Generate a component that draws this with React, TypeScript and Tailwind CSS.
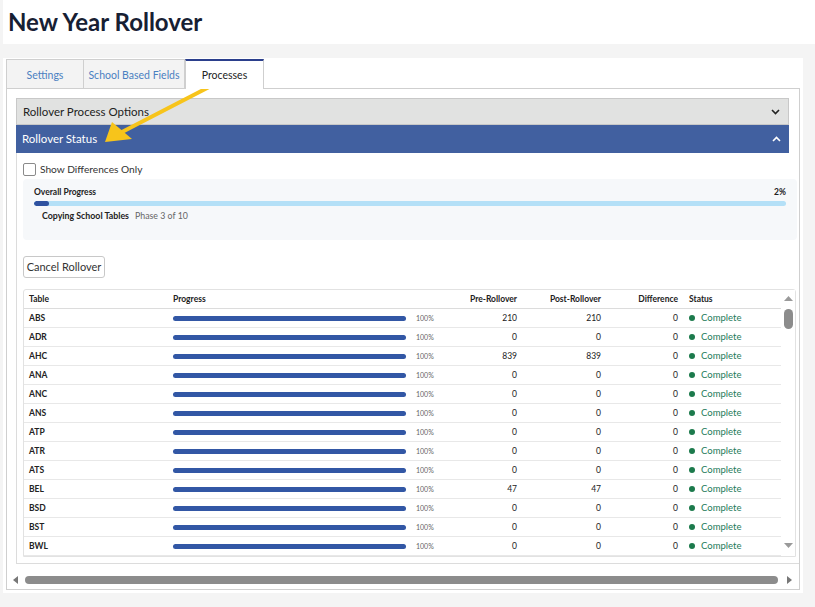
import React from 'react';

const rows: [string, number, number][] = [
  ['ABS', 210, 210],
  ['ADR', 0, 0],
  ['AHC', 839, 839],
  ['ANA', 0, 0],
  ['ANC', 0, 0],
  ['ANS', 0, 0],
  ['ATP', 0, 0],
  ['ATR', 0, 0],
  ['ATS', 0, 0],
  ['BEL', 47, 47],
  ['BSD', 0, 0],
  ['BST', 0, 0],
  ['BWL', 0, 0],
];

const cols = 'grid grid-cols-[143px_280px_75px_84px_77px_1fr] items-center';

const App = () => {
  return (
    <div className="relative min-h-screen bg-[#f4f4f4] font-['Lato',sans-serif] text-[#222]">
      {/* Header */}
      <div className="ml-[3px] flex h-[44px] items-center bg-white pl-[5px]">
        <h1 className="text-[24px] font-bold leading-none text-[#172033]">New Year Rollover</h1>
      </div>

      <div className="ml-[3px] mt-[14px] h-[535px] w-[800px] bg-white px-[3px] pt-[1px]">
        {/* Tabs */}
        <div className="relative z-10 flex h-[29px] text-[10.5px]">
          <div className="flex w-[78px] items-center justify-center border border-b-0 border-[#cfcfcf] bg-[#f3f3f3] pt-[3px] text-[#4a7fc1]">
            Settings
          </div>
          <div className="flex w-[101px] items-center justify-center border border-b-0 border-l-0 border-[#cfcfcf] bg-[#f3f3f3] pt-[3px] text-[#4a7fc1]">
            School Based Fields
          </div>
          <div className="-mb-px flex h-[30px] w-[79px] items-center justify-center border-x border-t-2 border-x-[#cfcfcf] border-t-[#2b3f8c] bg-white pt-[2px] text-[#222]">
            Processes
          </div>
        </div>

        {/* Tab content */}
        <div className="flex h-[502px] w-[794px] flex-col overflow-hidden border border-[#cfcfcf] pl-[9px] pt-[9px]">
          <div className="flex h-[27px] w-[773px] items-center justify-between border border-[#c8c8c8] bg-[#e1e2e1] pl-[6px] pr-[8px] text-[11.5px] text-[#222]">
            <span>Rollover Process Options</span>
            <svg width="9" height="6" viewBox="0 0 9 6" fill="none" stroke="#222" strokeWidth="1.6">
              <polyline points="1,1 4.5,4.5 8,1" />
            </svg>
          </div>
          <div className="flex h-[28px] w-[773px] items-center justify-between bg-[#4160a0] pl-[6px] pr-[8px] text-[11.5px] text-white">
            <span>Rollover Status</span>
            <svg width="9" height="6" viewBox="0 0 9 6" fill="none" stroke="#fff" strokeWidth="1.6">
              <polyline points="1,5 4.5,1.5 8,5" />
            </svg>
          </div>

          {/* Body */}
          <div className="w-[800px] shrink-0 border-b border-l border-[#dcdcdc] pb-[6px] pl-[6px] pt-[10px]">
            <label className="flex h-[13px] items-center gap-[4px] text-[10.2px] text-[#333]">
              <span className="inline-block h-[13px] w-[13px] rounded-[2px] border border-[#8a8a8a] bg-white" />
              Show Differences Only
            </label>

            <div className="mt-[3px] h-[61px] w-[774px] rounded-[4px] bg-[#f6f8fa] px-[11px] pt-[8px]">
              <div className="flex h-[10px] items-center justify-between text-[8.5px] font-bold text-[#222]">
                <span>Overall Progress</span>
                <span>2%</span>
              </div>
              <div className="mt-[4px] h-[5px] w-full overflow-hidden rounded-full bg-[#b4e0f7]">
                <div className="h-full w-[15px] rounded-full bg-[#2f52a0]" />
              </div>
              <div className="ml-[8px] mt-[5px] flex h-[10px] items-center gap-[6px] text-[8.8px]">
                <span className="font-bold text-[#222]">Copying School Tables</span>
                <span className="text-[#666]">Phase 3 of 10</span>
              </div>
            </div>

            <button className="mt-[16px] h-[22px] w-[82px] rounded-[3px] border border-[#c8c8c8] bg-white text-[11px] text-[#333]">
              Cancel Rollover
            </button>

            {/* Table */}
            <div className="mt-[11px] flex w-[773px] rounded-t-[3px] border border-[#e2e2e2]">
              <div className="w-[757px]">
                <div className={`${cols} h-[19px] border-b border-[#dcdcdc] text-[8.5px] font-bold`}>
                  <span className="pl-[5px]">Table</span>
                  <span className="pl-[6px]">Progress</span>
                  <span className="pr-[5px] text-right">Pre-Rollover</span>
                  <span className="pr-[5px] text-right">Post-Rollover</span>
                  <span className="pr-[5px] text-right">Difference</span>
                  <span className="pl-[6px]">Status</span>
                </div>
                {rows.map(([code, pre, post]) => (
                  <div key={code} className={`${cols} h-[19px] border-b border-[#e8e8e8] text-[8.5px]`}>
                    <span className="pl-[5px] font-bold">{code}</span>
                    <span className="flex items-center pl-[6px]">
                      <span className="inline-block h-[5px] w-[233px] rounded-full bg-[#3257a5]" />
                      <span className="ml-[10px] text-[7px] text-[#666]">100%</span>
                    </span>
                    <span className="pr-[5px] text-right">{pre}</span>
                    <span className="pr-[5px] text-right">{post}</span>
                    <span className="pr-[5px] text-right">{pre - post}</span>
                    <span className="flex items-center gap-[6px] pl-[6px] text-[9.5px] text-[#1e7b5a]">
                      <span className="inline-block h-[6px] w-[6px] rounded-full bg-[#1c7a4c]" />
                      Complete
                    </span>
                  </div>
                ))}
              </div>
              {/* vertical scrollbar */}
              <div className="flex w-[14px] flex-col items-center bg-white pt-[6px]">
                <svg width="9" height="5" viewBox="0 0 9 5">
                  <polygon points="0,5 4.5,0 9,5" fill="#9a9a9a" />
                </svg>
                <div className="mt-[8px] h-[20px] w-[9px] rounded-full bg-[#8c8c8c]" />
                <svg className="mb-[8px] mt-auto" width="9" height="5" viewBox="0 0 9 5">
                  <polygon points="0,0 9,0 4.5,5" fill="#9a9a9a" />
                </svg>
              </div>
            </div>
          </div>

          {/* horizontal scrollbar */}
          <div className="-ml-[9px] mt-[12px] flex h-[8px] items-center pl-[6px]">
            <svg width="5" height="8" viewBox="0 0 5 8">
              <polygon points="5,0 0,4 5,8" fill="#777" />
            </svg>
            <div className="ml-[7px] h-[8px] w-[753px] rounded-full bg-[#8c8c8c]" />
            <svg className="ml-[9px]" width="5" height="8" viewBox="0 0 5 8">
              <polygon points="0,0 5,4 0,8" fill="#777" />
            </svg>
          </div>
        </div>
      </div>

      {/* Annotation arrow */}
      <svg className="pointer-events-none absolute left-0 top-0" width="815" height="607">
        <line x1="211" y1="86" x2="122" y2="132" stroke="#f7c41b" strokeWidth="4" strokeLinecap="round" />
        <polygon points="105,142 112,122 132,139" fill="#f7c41b" />
      </svg>
    </div>
  );
};

export default App;
